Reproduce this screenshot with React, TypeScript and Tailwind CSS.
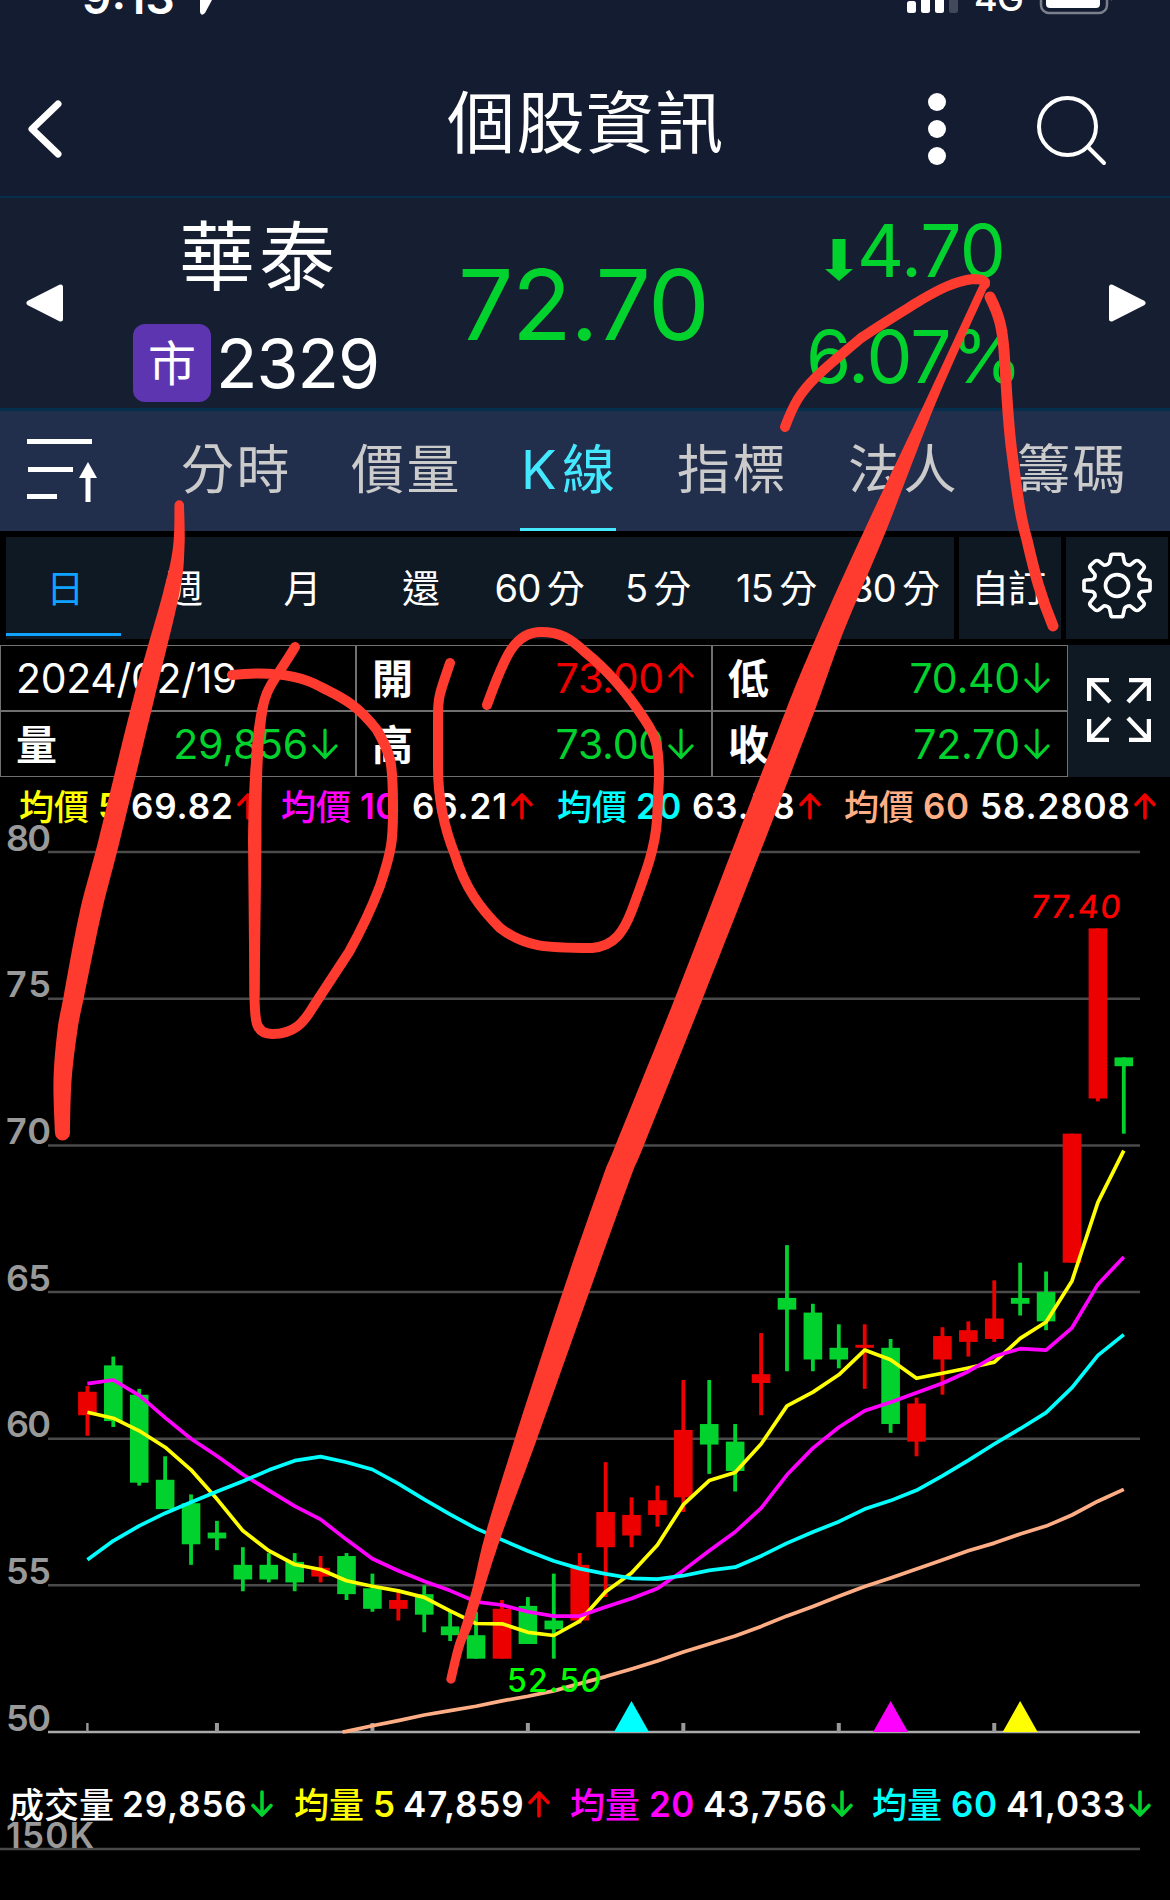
const GREEN = "#02d22d";
const RED = "#ec0000";

// [open, high, low, close]
const candles: [number, number, number, number][] = [
    [60.8, 61.8, 60.1, 61.6],
    [62.5, 62.8, 60.4, 60.6],
    [61.5, 61.7, 58.4, 58.5],
    [58.6, 59.4, 57.6, 57.6],
    [57.8, 58.1, 55.7, 56.4],
    [56.8, 57.2, 56.2, 56.6],
    [55.7, 56.3, 54.8, 55.2],
    [55.7, 56.1, 55.1, 55.2],
    [55.8, 56.1, 54.8, 55.1],
    [55.3, 56.0, 55.1, 55.6],
    [56.0, 56.1, 54.5, 54.7],
    [54.9, 55.4, 54.1, 54.2],
    [54.2, 54.8, 53.8, 54.5],
    [54.7, 55.0, 53.4, 54.0],
    [53.6, 54.1, 53.1, 53.3],
    [53.3, 54.1, 52.5, 52.5],
    [52.5, 54.5, 52.5, 54.2],
    [54.3, 54.6, 53.0, 53.0],
    [53.8, 55.4, 52.5, 53.5],
    [53.8, 56.1, 53.7, 55.7],
    [56.3, 59.2, 54.6, 57.5],
    [56.7, 58.0, 56.3, 57.4],
    [57.4, 58.4, 57.0, 57.9],
    [58.0, 62.0, 57.5, 60.3],
    [60.5, 62.0, 58.8, 59.8],
    [59.9, 60.5, 58.2, 58.9],
    [61.9, 63.6, 60.8, 62.2],
    [64.8, 66.6, 62.3, 64.4],
    [64.3, 64.6, 62.3, 62.7],
    [63.1, 63.9, 62.4, 62.7],
    [63.1, 63.9, 61.7, 63.2],
    [63.1, 63.4, 60.2, 60.5],
    [59.9, 61.4, 59.4, 61.2],
    [62.7, 63.8, 61.5, 63.5],
    [63.3, 64.0, 62.8, 63.7],
    [63.4, 65.4, 63.3, 64.1],
    [64.8, 66.0, 64.2, 64.6],
    [65.0, 65.7, 63.7, 64.0],
    [66.0, 70.4, 66.0, 70.4],
    [71.6, 77.4, 71.5, 77.4],
    [73.0, 73.0, 70.4, 72.7],
];

const ma5 = [
    60.9, 60.7, 60.27, 59.71, 58.94, 57.94, 56.86, 56.18, 55.71, 55.54, 55.16, 54.97, 54.81, 54.59, 54.13, 53.7, 53.69,
    53.4, 53.29, 53.78, 54.78, 55.42, 56.38, 57.75, 58.57, 58.85, 59.82, 61.12, 61.59, 62.18, 63.02, 62.69, 62.06, 62.23,
    62.41, 62.61, 63.42, 63.98, 65.38, 68.06, 69.82,
];
const ma10 = [
    61.88, 62, 61.48, 60.72, 60, 59.41, 58.78, 58.24, 57.7, 57.25, 56.56, 55.91, 55.5, 55.14, 54.82, 54.44, 54.33, 54.1,
    53.95, 53.95, 54.26, 54.55, 54.89, 55.51, 56.18, 56.82, 57.63, 58.77, 59.68, 60.39, 60.95, 61.24, 61.57, 61.89, 62.29,
    62.81, 63.07, 63.02, 63.78, 65.26, 66.2,
];
const ma20 = [
    55.87, 56.52, 57.03, 57.46, 57.83, 58.2, 58.55, 58.93, 59.25, 59.39, 59.2, 58.95, 58.47, 57.93, 57.42, 56.94, 56.55,
    56.17, 55.83, 55.57, 55.39, 55.24, 55.21, 55.33, 55.51, 55.62, 56, 56.44, 56.82, 57.17, 57.6, 57.89, 58.24, 58.73,
    59.26, 59.82, 60.34, 60.89, 61.74, 62.84, 63.55,
];
// starts at the 11th day, where the average rises above 50
const ma60 = [
    50.02, 50.21, 50.39, 50.58, 50.73, 50.88, 51.06, 51.22, 51.4, 51.65, 51.89, 52.15, 52.42, 52.73, 53, 53.27, 53.6,
    53.96, 54.28, 54.63, 54.96, 55.25, 55.56, 55.86, 56.18, 56.44, 56.75, 57.02, 57.4, 57.87, 58.27,
];

const CHART_TOP = 834;
const px = (i: number) => 87.4 + i * 25.91;
const py = (price: number) => 1732 - CHART_TOP - (price - 50) * 29.33;
const line = (values: number[], start = 0) => values.map((v, i) => `${px(i + start).toFixed(1)},${py(v).toFixed(1)}`).join(" ");

const StatusBar = () => (
    <div className="flex h-[50px] items-start justify-between pl-[82px] pr-[57px] text-white">
        <div className="flex items-start">
            <span className="-mt-[28px] text-[46px] font-semibold leading-[50px]">9:13</span>
            <svg className="ml-[20px]" width="30" height="16" viewBox="0 0 30 16">
                <path d="M5 0 V12 Q6 17 10 13 L17 0 Z" fill="#fff" />
            </svg>
        </div>
        <svg width="206" height="16" viewBox="907 0 206 16">
            <rect x="907" y="1" width="9" height="12" rx="2.5" fill="#fff" />
            <rect x="921" y="-9" width="9" height="22" rx="2.5" fill="#fff" />
            <rect x="935" y="-9" width="9" height="22" rx="2.5" fill="#fff" />
            <rect x="949" y="-9" width="9" height="22" rx="2.5" fill="#42495a" />
            <text x="974" y="11" fontSize="36" fontWeight="500" fill="#fff" textLength="50">4G</text>
            <rect x="1041" y="-20" width="66" height="33" rx="8" fill="none" stroke="#7b808c" strokeWidth="2.5" />
            <rect x="1046" y="-15" width="54" height="23" rx="4" fill="#fff" />
            <path d="M1111 -6 Q1114 -2 1111 1 Z" fill="#7b808c" />
        </svg>
    </div>
);

const Header = () => (
    <header className="flex h-[148px] items-center border-b-2 border-[#04304e] pl-[26px] pr-[59px] text-white">
        <svg width="40" height="64" viewBox="0 0 40 64" className="mt-[12px]">
            <path d="M32 7 L6 32 L32 57" fill="none" stroke="#fff" strokeWidth="7" strokeLinecap="round" strokeLinejoin="round" />
        </svg>
        <h1 className="ml-[381px] text-[68px] font-normal leading-[80px] tracking-[1.400px]">個股資訊</h1>
        <svg width="190" height="80" viewBox="920 90 190 80" className="ml-auto mt-[14px]">
            <circle cx="936" cy="102" r="9" fill="#fff" />
            <circle cx="936" cy="129" r="9" fill="#fff" />
            <circle cx="936" cy="156" r="9" fill="#fff" />
            <circle cx="1066.500" cy="126.500" r="28.500" fill="none" stroke="#fff" strokeWidth="4" />
            <path d="M1087 147 L1103 163" stroke="#fff" strokeWidth="4" strokeLinecap="round" />
        </svg>
    </header>
);

const Quote = () => (
    <section className="flex h-[213px] items-start border-b-[3px] border-[#04304e] bg-[#161f31] text-white">
        <svg width="38" height="38" viewBox="0 0 38 38" className="ml-[26px] mt-[86px]">
            <path d="M3 19 L34.500 3 V35 Z" fill="#fff" stroke="#fff" strokeWidth="5" strokeLinejoin="round" />
        </svg>
        <div className="ml-[69px] w-[260px]">
            <div className="mt-[13px] pl-[46px] text-[76px] leading-[92px] tracking-[4px]">華泰</div>
            <div className="mt-[21px] flex items-center">
                <span className="flex h-[78px] w-[78px] items-center justify-center rounded-xl bg-[#5e35b1] text-[48px] leading-none">
                    <span className="mt-[2px]">市</span>
                </span>
                <span className="ml-[5px] text-[68px] leading-[78px] tracking-[-1px]">2329</span>
            </div>
        </div>
        <div className="ml-[65px] mt-[49px] w-[330px] text-[98px] leading-[116px] tracking-[-1.500px] text-[#02d22d]">72.70</div>
        <div className="mt-[9px] w-[260px] text-[73px] text-[#02d22d]">
            <div className="flex items-center pl-[37px] leading-[88px]">
                <svg width="28" height="42" viewBox="0 0 28 42" className="mt-[18px]">
                    <path d="M7.500 0 H20.500 V30 H28 L14 42 L0 30 H7.500 Z" fill={GREEN} />
                </svg>
                <span className="ml-[4px] tracking-[-0.700px]">4.70</span>
            </div>
            <div className="mt-[18px] pl-[18px] leading-[88px] tracking-[-0.800px]">6.07%</div>
        </div>
        <svg width="38" height="38" viewBox="0 0 38 38" className="ml-[60px] mt-[86px]">
            <path d="M35 19 L3.500 3 V35 Z" fill="#fff" stroke="#fff" strokeWidth="5" strokeLinejoin="round" />
        </svg>
    </section>
);

const Tabs = () => (
    <nav className="flex h-[120px] items-stretch bg-[#212f4c] pl-[24px] text-[53px] leading-[118px] tracking-[2.500px] text-[#cbcbcb]">
        <svg width="76" height="120" viewBox="24 412 76 120" fill="#fff">
            <rect x="27" y="440" width="65" height="5" />
            <rect x="28" y="468" width="45" height="5" />
            <rect x="27" y="495" width="30" height="5" />
            <rect x="85.500" y="477" width="5" height="26" />
            <path d="M88 463 L97 479 H79 Z" />
        </svg>
        <span className="ml-[81px] w-[170px]">分時</span>
        <span className="w-[169px]">價量</span>
        <span className="flex w-[96px] border-b-[3px] border-[#44e9ff] pl-[1px] text-[#44e9ff]">
            K<span className="ml-[3px]">線</span>
        </span>
        <span className="ml-[61px] w-[171px]">指標</span>
        <span className="w-[169px]">法人</span>
        <span>籌碼</span>
    </nav>
);

const periods = ["日", "週", "月", "還", "60 分", "5 分", "15 分", "30 分"];

const Periods = () => (
    <div className="flex h-[114px] gap-[5px] bg-black px-[6px] pb-[6px] pt-[6px] text-[38px] text-white">
        <div className="grid w-[948px] shrink-0 grid-cols-8 bg-[#0f1923]">
            {periods.map((p, i) => (
                <div key={p} className="flex flex-col items-center">
                    <span className={i === 0 ? "leading-[102px] text-[#10a2ff]" : "leading-[102px] tracking-[-0.700px] [word-spacing:-4px]"}>{p}</span>
                    {i === 0 && <span className="-mt-[6px] h-[3px] w-[115px] self-start bg-[#10a2ff]" />}
                </div>
            ))}
        </div>
        <div className="w-[102px] shrink-0 bg-[#0f1923] pr-[4px] text-center leading-[102px] tracking-[-1px]">自訂</div>
        <div className="flex w-[102px] shrink-0 items-center justify-center bg-[#0f1923]">
            <Gear />
        </div>
    </div>
);

const Gear = () => (
    <svg width="72" height="76" viewBox="-36 -35.500 72 76" fill="none" stroke="#fff" strokeWidth="3.700" strokeLinejoin="round">
        <ellipse rx="11.500" ry="10.800" />
        <g transform="scale(1 0.92)">
            <path d="M-6 -32.500 Q-6 -34 -4 -34 H4 Q6 -34 6 -32.500 L7.500 -25 Q9 -22 13 -22 L18 -26.500 Q20 -28 22 -26.500 L26.500 -22 Q28 -20 26.500 -18 L22 -12 Q21.500 -8 24.500 -6.500 L31 -6 Q33 -6 33 -4 V4 Q33 6 31 6 L24.500 6.500 Q21.500 8 22 12 L26.500 18 Q28 20 26.500 22 L22 26.500 Q20 28 18 26.500 L13 22 Q9 22 7.500 25 L6 32.500 Q6 34 4 34 H-4 Q-6 34 -6 32.500 L-7.500 25 Q-9 22 -13 22 L-18 26.500 Q-20 28 -22 26.500 L-26.500 22 Q-28 20 -26.500 18 L-22 12 Q-21.500 8 -24.500 6.500 L-31 6 Q-33 6 -33 4 V-4 Q-33 -6 -31 -6 L-24.500 -6.500 Q-21.500 -8 -22 -12 L-26.500 -18 Q-28 -20 -26.500 -22 L-22 -26.500 Q-20 -28 -18 -26.500 L-13 -22 Q-9 -22 -7.500 -25 Z" />
        </g>
    </svg>
);

const Arrow = ({ up = false, small = false }: { up?: boolean; small?: boolean }) => (
    <svg
        width={small ? 22 : 26}
        height={small ? 28 : 32}
        viewBox={small ? "0 0 22 28" : "0 0 26 32"}
        className="shrink-0"
        fill="none"
        stroke={up ? RED : GREEN}
        strokeWidth={small ? 3.6 : 3.2}
        strokeLinecap="round"
        strokeLinejoin="round"
    >
        {small ? (
            <path d={up ? "M11 26 V3 M2 12.500 L11 3 L20 12.500" : "M11 2 V25 M2 15.500 L11 25 L20 15.500"} />
        ) : (
            <path d={up ? "M13 30 V2.500 M2 14 L13 2.500 L24 14" : "M13 2 V29.500 M2 18 L13 29.500 L24 18"} />
        )}
    </svg>
);

const Cell = ({ label, value, up = false, plain = false }: { label: string; value?: string; up?: boolean; plain?: boolean }) => (
    <div className="flex h-[66px] w-[356px] items-center justify-between border border-[#707070] pl-[15px] pr-[17px]">
        <span className={plain ? "text-[41px] leading-[60px] tracking-[-0.300px]" : "mt-[2px] text-[41px] font-semibold leading-[60px]"}>{label}</span>
        {value && (
            <span className="flex items-center gap-[4px]">
                <span className={up ? "text-[41px] leading-[60px] tracking-[-0.200px] text-[#ec0000]" : "text-[41px] leading-[60px] tracking-[-0.200px] text-[#02d22d]"}>{value}</span>
                <Arrow up={up} />
            </span>
        )}
    </div>
);

const PriceTable = () => (
    <div className="flex h-[132px] text-white">
        <div className="grid w-[1068px] shrink-0 grid-cols-3">
            <Cell label="2024/02/19" plain />
            <Cell label="開" value="73.00" up />
            <Cell label="低" value="70.40" />
            <Cell label="量" value="29,856" />
            <Cell label="高" value="73.00" />
            <Cell label="收" value="72.70" />
        </div>
        <div className="flex grow items-center justify-center bg-[#0f1923]">
            <svg width="64" height="64" viewBox="0 0 64 64" fill="none" stroke="#fff" strokeWidth="4.500" className="-mt-[3px]">
                <path d="M2 23 V2 H22 M2 2 L23 24" />
                <path d="M42 2 H62 V23 M62 2 L41 24" />
                <path d="M2 41 V62 H22 M2 62 L23 40" />
                <path d="M42 62 H62 V41 M62 62 L41 40" />
            </svg>
        </div>
    </div>
);

type LegendProps = { className: string; name: string; days?: string; nameClass: string; value: string; up?: boolean };

const Legend = ({ className, name, days, nameClass, value, up = false }: LegendProps) => (
    <div className={`flex shrink-0 items-center whitespace-nowrap ${className}`}>
        <span className={`flex ${nameClass}`}>
            <span className="mt-[1px] font-medium">{name}</span>
            {days && <span className="ml-[9px] tracking-[0.500px]">{days}</span>}
        </span>
        <span className="mr-[3px] tracking-[0.900px] text-white">{value}</span>
        <Arrow up={up} small />
    </div>
);

const PriceLegend = () => (
    <div className="flex h-[57px] pl-[19px] pt-[1px] text-[35px] font-semibold leading-[60px]">
        <Legend className="w-[262px]" nameClass="w-[112px] text-[#ffff00]" name="均價" days="5" value="69.82" up />
        <Legend className="w-[276px]" nameClass="w-[131px] text-[#ff00ff]" name="均價" days="10" value="66.21" up />
        <Legend className="w-[287px]" nameClass="w-[135px] text-[#00ffff]" name="均價" days="20" value="63.58" up />
        <Legend className="" nameClass="w-[136px] text-[#ffad85]" name="均價" days="60" value="58.2808" up />
    </div>
);

const Chart = () => (
    <svg className="block overflow-visible" width="1170" height="931" viewBox="0 0 1170 931" fill="none">
        {[80, 75, 70, 65, 60, 55, 50].map((p) => (
            <g key={p}>
                <line x1="48" x2="1140" y1={py(p)} y2={py(p)} stroke={p === 50 ? "#aaaaaa" : "#4a4a4a"} strokeWidth="2.500" />
                <text x="6" y={py(p) - 1.5} fontSize="36" fontWeight="600" fill="#999" textLength="45">{p}</text>
            </g>
        ))}
        {[0, 5, 11, 17, 23, 29, 35].map((i) => (
            <rect key={i} x={px(i) - (i ? 2 : 1.2)} y="889" width={i ? 4 : 2.4} height="9" fill="#999" />
        ))}
        {candles.map(([open, high, low, close], i) => {
            const color = close > open ? RED : GREEN;
            return (
                <g key={i} fill={color}>
                    <rect x={px(i) - 1.9} y={py(high)} width="3.800" height={py(low) - py(high)} />
                    <rect x={px(i) - 9.3} y={py(Math.max(open, close))} width="18.600" height={Math.abs(open - close) * 29.33} />
                </g>
            );
        })}
        <g strokeWidth="3.700" strokeLinejoin="round">
            <polyline points={`342.5,898 ${line(ma60, 10)}`} stroke="#ffad85" />
            <polyline points={line(ma5)} stroke="#ffff00" />
            <polyline points={line(ma10)} stroke="#ff00ff" />
            <polyline points={line(ma20)} stroke="#00ffff" />
        </g>
        <text x="1034" y="84" fontSize="32" fontWeight="500" fill="#ff0000" textLength="90" transform="translate(1034 84) skewX(-6) translate(-1038 -84)">77.40</text>
        <text x="507" y="857.500" fontSize="32" fontWeight="500" fill="#00ff00" textLength="94">
            52.5<tspan fontStyle="italic">0</tspan>
        </text>
        {[[21, "#00ffff"], [31, "#ff00ff"], [36, "#ffff00"]].map(([i, color]) => (
            <path key={i} d={`M${px(Number(i))} 867 l17.500 31 h-35 Z`} fill={String(color)} />
        ))}
    </svg>
);

const VolumeLegend = () => (
    <div className="flex h-[60px] pl-[9px] pt-[9px] text-[35px] font-semibold leading-[60px]">
        <Legend className="h-[60px] w-[285px]" nameClass="w-[113px] text-white" name="成交量" value="29,856" />
        <Legend className="h-[60px] w-[276px]" nameClass="w-[109px] text-[#ffff00]" name="均量" days="5" value="47,859" up />
        <Legend className="h-[60px] w-[302px]" nameClass="w-[133px] text-[#ff00ff]" name="均量" days="20" value="43,756" />
        <Legend className="h-[60px]" nameClass="w-[134px] text-[#00ffff]" name="均量" days="60" value="41,033" />
    </div>
);

const VolumeChart = () => (
    <svg className="block overflow-visible" width="1170" height="75" viewBox="0 1825 1170 75">
        <line x1="0" x2="1140" y1="1849" y2="1849" stroke="#4a4a4a" strokeWidth="2.500" />
        <text x="6" y="1848" fontSize="35" fontWeight="600" fill="#999" textLength="88">150K</text>
    </svg>
);

// Pressure-sensitive strokes: [y, left edge, right edge], from top to bottom
const barStroke: number[][] = [
    [505, 174.5, 184], [547, 173, 184.5], [593, 163, 179.5], [700, 133, 154], [840, 98.5, 120], [913, 79.5, 101.5],
    [997, 63.5, 84], [1030, 57.5, 77.5], [1080, 53.5, 71.6], [1133, 55, 70],
];
const arrowStroke: number[][] = [
    [284, 980, 989], [400, 926, 937], [531, 864, 886], [633, 818, 843], [710, 786, 815], [840, 736, 765], [999, 674.6, 702.5],
    [1145, 615.6, 644], [1180, 601.7, 629.7], [1292, 562.7, 589.3], [1438, 515, 537.3], [1533, 485.7, 502.3],
    [1585, 473.3, 485.3], [1623, 462.3, 473.3], [1647, 454, 463.7], [1679, 446.3, 455.7],
];

// Catmull-Rom spline through the points, as bezier segments
const spline = (pts: number[][]) =>
    pts
        .slice(1)
        .map((p, i) => {
            const a = pts[Math.max(i - 1, 0)];
            const b = pts[i];
            const c = pts[Math.min(i + 2, pts.length - 1)];
            return `C${b[0] + (p[0] - a[0]) / 6} ${b[1] + (p[1] - a[1]) / 6} ${p[0] - (c[0] - b[0]) / 6} ${p[1] - (c[1] - b[1]) / 6} ${p[0]} ${p[1]}`;
        })
        .join(" ");

const brush = (rows: number[][]) => {
    const right = rows.map(([y, , r]) => [r, y]);
    const left = rows.map(([y, l]) => [l, y]).reverse();
    const cap = (a: number[], b: number[]) => `A${Math.abs(a[0] - b[0]) / 2} ${Math.abs(a[0] - b[0]) / 2} 0 0 1 ${b[0]} ${b[1]}`;
    return `M${right[0][0]} ${right[0][1]} ${spline(right)} ${cap(right[right.length - 1], left[0])} ${spline(left)} ${cap(left[left.length - 1], right[0])} Z`;
};

// Hand-drawn marks over the whole screen
const Marker = () => (
    <svg className="absolute left-0 top-0" width="1170" height="1900" viewBox="0 0 1170 1900" fill="none" strokeLinecap="round" strokeLinejoin="round">
        <path fill="#ff3b30" d={brush(barStroke)} />
        <path fill="#ff3b30" d={brush(arrowStroke)} />
        <g stroke="#ff3b30" strokeWidth="10">
            <path d="M985 284 Q986 279 973 279 C955 281 938 290 921 300 C900 313 880 325 861 338 C846 351 830 363 816 377 C800 393 794 403 785 427" />
            <path d="M990 297 C1000 317 1002 328 1004 350 C1007 395 1008 425 1012 453 C1018 500 1021 520 1027 540 C1035 575 1041 597 1053 626" strokeWidth="11" />
            <path d="M295 647 C280 672 271 682 267 693 C260 710 256 745 255.500 780 L255 840 L254.500 997 C255 1020 255 1034 272 1034 C295 1034 304 1022 313 1007 L349 952 C363 927 372 907 380 886 C392 850 393 840 393 810 C393 760 391 755 377 730 C355 702 340 697 321 687 C300 675 270 671 232 675" />
            <path d="M450 663 C441 690 438 695 438 715 V767 C438 800 445 830 455 855 C465 888 480 908 500 928 C525 947 545 948 592 948 C615 946 624 931 632 910 C645 875 655 850 657 820 L659 777 C659 745 655 735 645 720 C620 682 600 664 585 652 C570 638 560 632 541 632 C515 632 505 655 487 705" />
        </g>
        <path fill="#ff3b30" d="M260 705 C252 735 249 770 248 840 L249.500 997 H259.500 L261.500 840 C261.500 780 262 745 268 705 Z" />
    </svg>
);

export default function App() {
    return (
        <div className="relative h-[1900px] w-[1170px] overflow-hidden bg-black font-['Inter','Noto_Sans_CJK_TC',sans-serif]">
            <div className="bg-[#131c30]">
                <StatusBar />
                <Header />
            </div>
            <Quote />
            <Tabs />
            <Periods />
            <PriceTable />
            <PriceLegend />
            <Chart />
            <VolumeLegend />
            <VolumeChart />
            <Marker />
        </div>
    );
}
